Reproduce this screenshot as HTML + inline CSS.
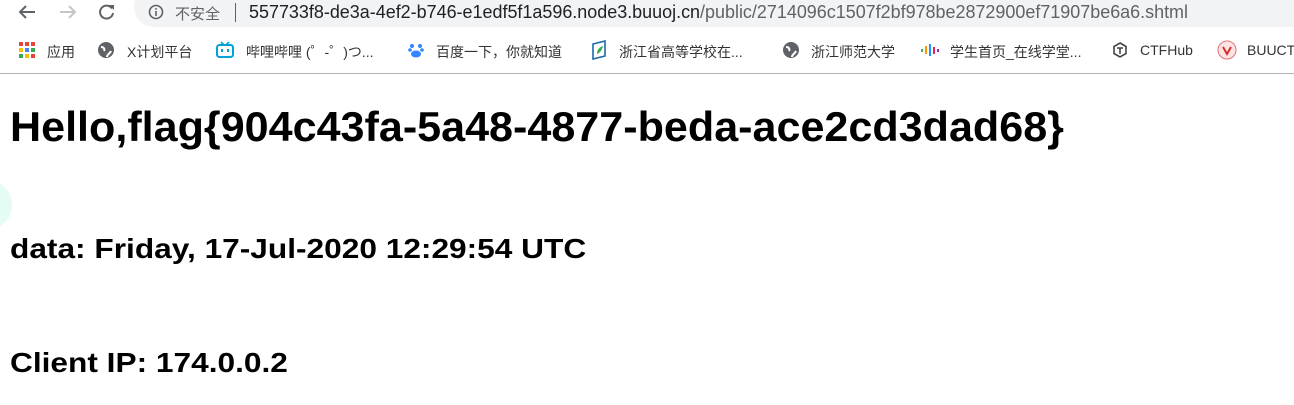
<!DOCTYPE html>
<html><head><meta charset="utf-8"><style>
*{margin:0;padding:0;box-sizing:border-box}
body{width:1294px;height:405px;background:#fff;position:relative;overflow:hidden;font-family:"Liberation Sans","Noto Sans CJK SC",sans-serif}
.abs{position:absolute;white-space:nowrap}
.pill{position:absolute;left:134px;top:-14px;width:1200px;height:41px;border-radius:21px;background:#f1f3f4}
.url{left:249px;top:2px;font-size:18px;color:#202124;transform:scaleX(0.997);transform-origin:left top}
.url span{color:#5f6368}
.bm{top:42px;font-size:14px;color:#333}
.sep{position:absolute;left:0;top:73px;width:1294px;height:1px;background:#b3b3b3}
h{position:absolute;left:10px;font-weight:bold;color:#000;white-space:nowrap;transform-origin:left top}
</style></head><body>
<div class="pill"></div>
<svg class="abs" style="left:17px;top:4px" width="20" height="16" viewBox="0 0 20 16"><path d="M18 8H3M9 2L3 8l6 6" stroke="#5f6368" stroke-width="2" fill="none"/></svg>
<svg class="abs" style="left:58px;top:4px" width="20" height="16" viewBox="0 0 20 16"><path d="M2 8h15M11 2l6 6-6 6" stroke="#c4c6c9" stroke-width="2" fill="none"/></svg>
<svg class="abs" style="left:98px;top:3px" width="18" height="18" viewBox="0 0 18 18"><path d="M14 5.5A6.5 6.5 0 1 0 15 10" stroke="#5f6368" stroke-width="2" fill="none"/><path d="M11 2h5v5z" fill="#5f6368"/></svg>
<svg class="abs" style="left:148px;top:4px" width="16" height="16" viewBox="0 0 16 16"><circle cx="8" cy="8" r="6.5" stroke="#5f6368" stroke-width="1.6" fill="none"/><rect x="7.2" y="7" width="1.6" height="5" fill="#5f6368"/><rect x="7.2" y="4" width="1.6" height="1.6" fill="#5f6368"/></svg>
<div class="abs" style="left:175px;top:3px;font-size:15px;color:#5f6368">不安全</div>
<div class="abs" style="left:235px;top:3px;width:1px;height:19px;background:#5f6368"></div>
<div class="abs url">557733f8-de3a-4ef2-b746-e1edf5f1a596.node3.buuoj.cn<span>/public/2714096c1507f2bf978be2872900ef71907be6a6.shtml</span></div>

<svg class="abs" style="left:19px;top:42px" width="16" height="16"><g><rect x="0" y="0" width="4" height="4" fill="#ea4335"/><rect x="6" y="0" width="4" height="4" fill="#ea4335"/><rect x="12" y="0" width="4" height="4" fill="#ea4335"/><rect x="0" y="6" width="4" height="4" fill="#fbbc05"/><rect x="6" y="6" width="4" height="4" fill="#4285f4"/><rect x="12" y="6" width="4" height="4" fill="#34a853"/><rect x="0" y="12" width="4" height="4" fill="#34a853"/><rect x="6" y="12" width="4" height="4" fill="#fbbc05"/><rect x="12" y="12" width="4" height="4" fill="#ea4335"/></g></svg>
<div class="abs bm" style="left:47px">应用</div>
<svg class="abs" style="left:98px;top:42px" width="16" height="16"><circle cx="8" cy="8" r="8" fill="#5f6368"/><path d="M3 5c3 0 4 2 3 4M9 15c0-3 3-3 4-6" stroke="#fff" stroke-width="2" fill="none"/></svg>
<div class="abs bm" style="left:127px">X计划平台</div>
<svg class="abs" style="left:216px;top:41px" width="18" height="17"><rect x="1" y="4" width="16" height="12" rx="2.5" stroke="#00a1d6" stroke-width="2" fill="none"/><path d="M5 1l3 3M13 1l-3 3" stroke="#00a1d6" stroke-width="1.6"/><rect x="5" y="8" width="2" height="3" fill="#00a1d6"/><rect x="11" y="8" width="2" height="3" fill="#00a1d6"/></svg>
<div class="abs bm" style="left:246px">哔哩哔哩 (゜-゜)つ...</div>
<svg class="abs" style="left:408px;top:41px" width="16" height="17"><circle cx="4" cy="5" r="2" fill="#3385ff"/><circle cx="12" cy="5" r="2" fill="#3385ff"/><circle cx="2" cy="9" r="1.8" fill="#3385ff"/><circle cx="14" cy="9" r="1.8" fill="#3385ff"/><ellipse cx="8" cy="13" rx="5" ry="3.5" fill="#3385ff"/></svg>
<div class="abs bm" style="left:436px">百度一下，你就知道</div>
<svg class="abs" style="left:591px;top:40px" width="16" height="20"><path d="M2 4l12-3v15L2 19z" stroke="#1a6aa8" stroke-width="1.6" fill="none"/><path d="M6 14c0-5 3-7 6-8-1 4-3 7-6 8z" fill="#3aa84a"/></svg>
<div class="abs bm" style="left:619px">浙江省高等学校在...</div>
<svg class="abs" style="left:783px;top:42px" width="16" height="16"><circle cx="8" cy="8" r="8" fill="#5f6368"/><path d="M3 5c3 0 4 2 3 4M9 15c0-3 3-3 4-6" stroke="#fff" stroke-width="2" fill="none"/></svg>
<div class="abs bm" style="left:811px">浙江师范大学</div>
<svg class="abs" style="left:920px;top:43px" width="20" height="14"><rect x="1" y="6" width="2" height="3" fill="#4caf50"/><rect x="5" y="3" width="2" height="8" fill="#ff9800"/><rect x="9" y="1" width="2" height="12" fill="#2196f3"/><rect x="13" y="4" width="2" height="7" fill="#e91e63"/><rect x="17" y="6" width="2" height="3" fill="#9c27b0"/></svg>
<div class="abs bm" style="left:950px">学生首页_在线学堂...</div>
<svg class="abs" style="left:1112px;top:42px" width="16" height="16"><path d="M8 1l6 3.5v7L8 15l-6-3.5v-7z" stroke="#444" stroke-width="1.6" fill="none"/><path d="M5 6h6M8 6v6" stroke="#444" stroke-width="1.6"/></svg>
<div class="abs bm" style="left:1140px">CTFHub</div>
<svg class="abs" style="left:1217px;top:40px" width="20" height="20"><circle cx="10" cy="10" r="9" fill="#fde3e3" stroke="#e57373"/><path d="M6 7l4 7 4-7" stroke="#d32f2f" stroke-width="2" fill="none"/></svg>
<div class="abs bm" style="left:1247px">BUUCTF</div>
<div class="sep"></div>

<div class="abs" style="left:-38px;top:180px;width:50px;height:50px;border-radius:50%;background:#e4fcf4"></div>
<h style="top:103px;font-size:42px;transform:scaleX(1.026)">Hello,flag{904c43fa-5a48-4877-beda-ace2cd3dad68}</h>
<h style="top:233px;font-size:28px;transform:scaleX(1.13)">data: Friday, 17-Jul-2020 12:29:54 UTC</h>
<h style="top:347px;font-size:28px;transform:scaleX(1.13)">Client IP: 174.0.0.2</h>
</body></html>
